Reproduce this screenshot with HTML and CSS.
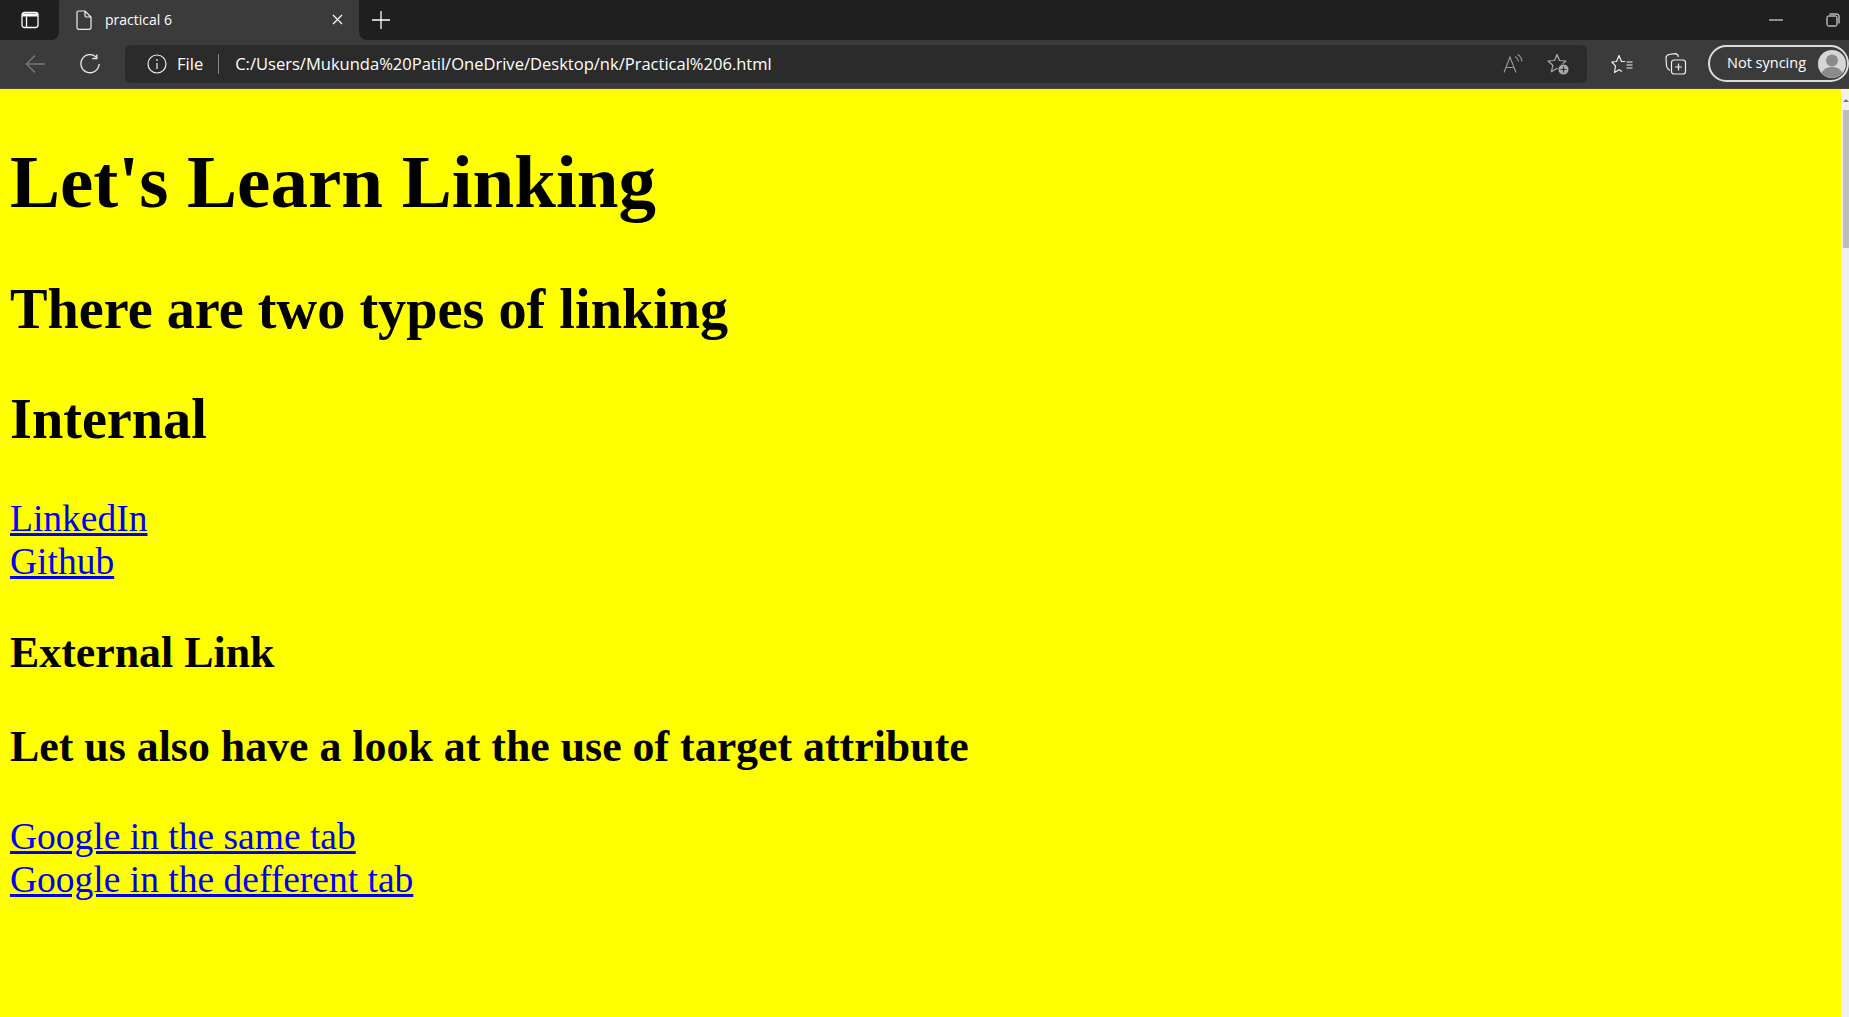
FILE: index.html
```html
<!DOCTYPE html>
<html lang="en">
<head>
  <meta charset="UTF-8" />
  <title>practical 6</title>
  <link rel="stylesheet" href="styles.css">
</head>
<body>
  <div class="browser">
    <div class="tabstrip">
      <button class="tab-actions">
        <svg width="18" height="18" viewBox="0 0 18 18" fill="none" stroke="#fff" stroke-width="1.3"><rect x="1" y="1.5" width="16" height="15" rx="2.5"/><path d="M5.500 5.500v10.500"/><path d="M1.500 4h15" stroke-width="3"/></svg>
      </button>
      <div class="tab">
        <svg class="tab-icon" width="16" height="20" viewBox="0 0 16 20" fill="none" stroke="#eee" stroke-width="1.2"><path d="M2.500 1h6.500l6 6v10.500a1.800 1.800 0 0 1-1.800 1.800H2.800A1.800 1.800 0 0 1 1 17.500V2.500A1.500 1.500 0 0 1 2.500 1zM9 1v4.500a1.500 1.500 0 0 0 1.500 1.500H15"/></svg>
        <span class="tab-title">practical 6</span>
        <svg class="tab-close" width="11" height="11" viewBox="0 0 11 11" stroke="#fff" stroke-width="1.2"><path d="M1 1l9 9M10 1l-9 9"/></svg>
      </div>
      <div class="strip-rest">
        <svg class="new-tab" width="18" height="18" viewBox="0 0 18 18" stroke="#fff" stroke-width="1.3"><path d="M9 0v18M0 9h18"/></svg>
        <div class="window-controls">
          <svg width="14" height="14" viewBox="0 0 14 14" stroke="#fff" stroke-width="1"><path d="M0 7h14"/></svg>
          <svg width="14" height="14" viewBox="0 0 14 14" fill="none" stroke="#fff" stroke-width="1"><rect x="1" y="3" width="10" height="10" rx="1.500"/><path d="M3.500 1h7.500a2 2 0 0 1 2 2v7.500"/></svg>
        </div>
      </div>
    </div>
    <div class="toolbar">
      <svg class="nav-btn" width="20" height="20" viewBox="0 0 20 20" fill="none" stroke="#777" stroke-width="1.4"><path d="M20 10H1.500M10 1.500L1.500 10l8.500 8.500"/></svg>
      <svg class="nav-btn reload" width="20" height="20" viewBox="0 0 22 22" fill="none" stroke="#e8e8e8" stroke-width="1.500"><path d="M18 3.500A10 10 0 1 0 21 11"/><path d="M18.500 0.500v4.500h-5"/></svg>
      <div class="address">
        <svg width="20" height="20" viewBox="0 0 20 20" fill="none" stroke="#f0f0f0" stroke-width="1.200"><circle cx="10" cy="10" r="9"/><path d="M10 9v6"/><path d="M10 5.200v1.600" stroke-width="1.600"/></svg>
        <span class="scheme">File</span>
        <span class="divider"></span>
        <span class="url">C:/Users/Mukunda%20Patil/OneDrive/Desktop/nk/Practical%206.html</span>
        <div class="address-icons">
          <svg width="20" height="20" viewBox="0 0 20 20" fill="none" stroke="#999" stroke-width="1.100"><path d="M1 18.500L7 3l6 15.500M3 13.500h8"/><path d="M12 2.500c2 1 3 2.500 3.500 5M14.500 0.500c2.500 1 4 3.500 4.500 7"/></svg>
          <svg width="22" height="22" viewBox="0 0 22 22" fill="none" stroke="#aaa" stroke-width="1.200" stroke-linejoin="round"><path d="M10 1.500L12.500 7.500 19 8 14.100 12.300 15.600 18.700 10 15.300 4.400 18.700 5.900 12.300 1 8 7.500 7.500z"/><circle cx="16.500" cy="16.500" r="5.500" fill="#aaa" stroke="#2b2b2b" stroke-width="1"/><path d="M16.500 13.500v6M13.500 16.500h6" stroke="#333"/></svg>
        </div>
      </div>
      <svg class="tool-btn" width="22" height="20" viewBox="0 0 22 20" fill="none" stroke="#eee" stroke-width="1.200" stroke-linejoin="round"><path d="M14 7.500H10.500L8 1.500 5.500 7.500 .8 8 4.500 11.800 3.500 18.500 8 15.700 11 17.500"/><path d="M15.500 8h6M15.500 11h6M15.500 14h6"/></svg>
      <svg class="tool-btn" width="22" height="22" viewBox="0 0 22 22" fill="none" stroke="#eee" stroke-width="1.200"><path d="M5 17.500C3 16.500 2 15.500 1.500 13L1 5c0-2 1-3 3-3.500l6-.8c2 0 3 1 3.500 3.200"/><rect x="6.500" y="7" width="14" height="14" rx="2.500"/><path d="M13.500 10.500v7M10 14h7"/></svg>
      <div class="profile">
        <span class="profile-label">Not syncing</span>
        <svg class="avatar" width="28" height="28" viewBox="0 0 28 28"><circle cx="14" cy="14" r="14" fill="#d6d6d6"/><circle cx="14" cy="10.500" r="6" fill="#8a8a8a"/><path d="M3.500 23c2-4 6-6 10.500-6s8.500 2 10.500 6a14 14 0 0 1-21 0z" fill="#8a8a8a"/></svg>
      </div>
    </div>
  </div>

  <div class="viewport">
    <main class="page">
      <h1>Let's Learn Linking</h1>
      <h2>There are two types of linking</h2>
      <h2>Internal</h2>
      <a href="#">LinkedIn</a><br>
      <a href="#">Github</a>
      <h3>External Link</h3>
      <h3>Let us also have a look at the use of target attribute</h3>
      <a href="#">Google in the same tab</a><br>
      <a href="#">Google in the defferent tab</a>
    </main>
    <div class="scrollbar">
      <div class="scroll-arrow"></div>
      <div class="scroll-thumb"></div>
    </div>
  </div>
</body>
</html>
```

FILE: styles.css
```css
* { box-sizing: border-box; }
html, body { height: 100%; }
body { margin: 0; display: flex; flex-direction: column; overflow: hidden; background: #ffff00; }

/* Browser chrome */
.browser { flex: none; font-family: 'Open Sans', 'Noto Sans', sans-serif; color: #fff; }
.tabstrip { height: 40px; background: #3b3b3b; display: flex; }
.tab-actions { width: 59px; height: 40px; background: #1f1f1f; border: none; border-radius: 0 0 8px 0; padding: 0 0 0 1px; display: flex; align-items: center; justify-content: center; }
.tab { width: 300px; height: 40px; background: #3b3b3b; border-radius: 8px 8px 0 0; display: flex; align-items: center; padding: 0 16px 1px 17px; }
.tab-title { flex: 1; margin-left: 13px; font-size: 14px; padding-bottom: 1px; }
.strip-rest { flex: 1; height: 40px; background: #1f1f1f; border-radius: 0 0 0 8px; display: flex; align-items: center; }
.new-tab { margin-left: 13px; }
.window-controls { margin-left: auto; display: flex; gap: 43px; padding-right: 9px; }
.toolbar { height: 49px; background: #3b3b3b; border-bottom: 1px solid #4a4a3a; display: flex; align-items: center; padding-bottom: 1px; }
.nav-btn { margin-left: 25px; flex: none; }
.reload { margin-left: 35px; }
.address { width: 1462px; height: 38px; flex: none; margin-left: 25px; background: #2b2b2b; border-radius: 6px; display: flex; align-items: center; padding-left: 22px; font-size: 16.55px; }
.scheme { margin-left: 10px; }
.divider { width: 1px; height: 20px; background: #888; margin: 0 16px 0 15px; }
.address-icons { margin-left: auto; display: flex; align-items: center; gap: 24px; padding-right: 18px; }
.tool-btn { margin-left: 24px; flex: none; }
.tool-btn + .tool-btn { margin-left: 32px; }
.profile { width: 141px; height: 37px; flex: none; margin-left: 21px; border: 2px solid #dcdcdc; border-radius: 19px; display: flex; align-items: center; padding-left: 17px; font-size: 14.5px; }
.profile-label { padding-bottom: 2px; }
.avatar { margin-left: 12px; flex: none; }

/* Page content */
.viewport { flex: 1; min-height: 0; display: flex; }
.page { flex: 1; padding: 0 10px; font-family: 'Liberation Serif', 'Times New Roman', serif; font-size: 37.5px; color: #000; }
.page a { color: #0000ee; }
h1 { font-size: 75px; margin: 50.25px 0 51.25px; }
h2 { font-size: 56.25px; margin: 46.7px 0 45.7px; }
h3 { font-size: 43.875px; margin: 43.875px 0; }

.scrollbar { width: 8px; background: #f0f0f0; }
.scroll-arrow { height: 21px; padding: 10px 0 0 2px; }
.scroll-arrow::before { content: ''; display: block; width: 0; height: 0; border-left: 3px solid transparent; border-right: 3px solid transparent; border-bottom: 3px solid #777; }
.scroll-thumb { height: 138px; margin-left: 2px; background: #bdbdbd; }
```
